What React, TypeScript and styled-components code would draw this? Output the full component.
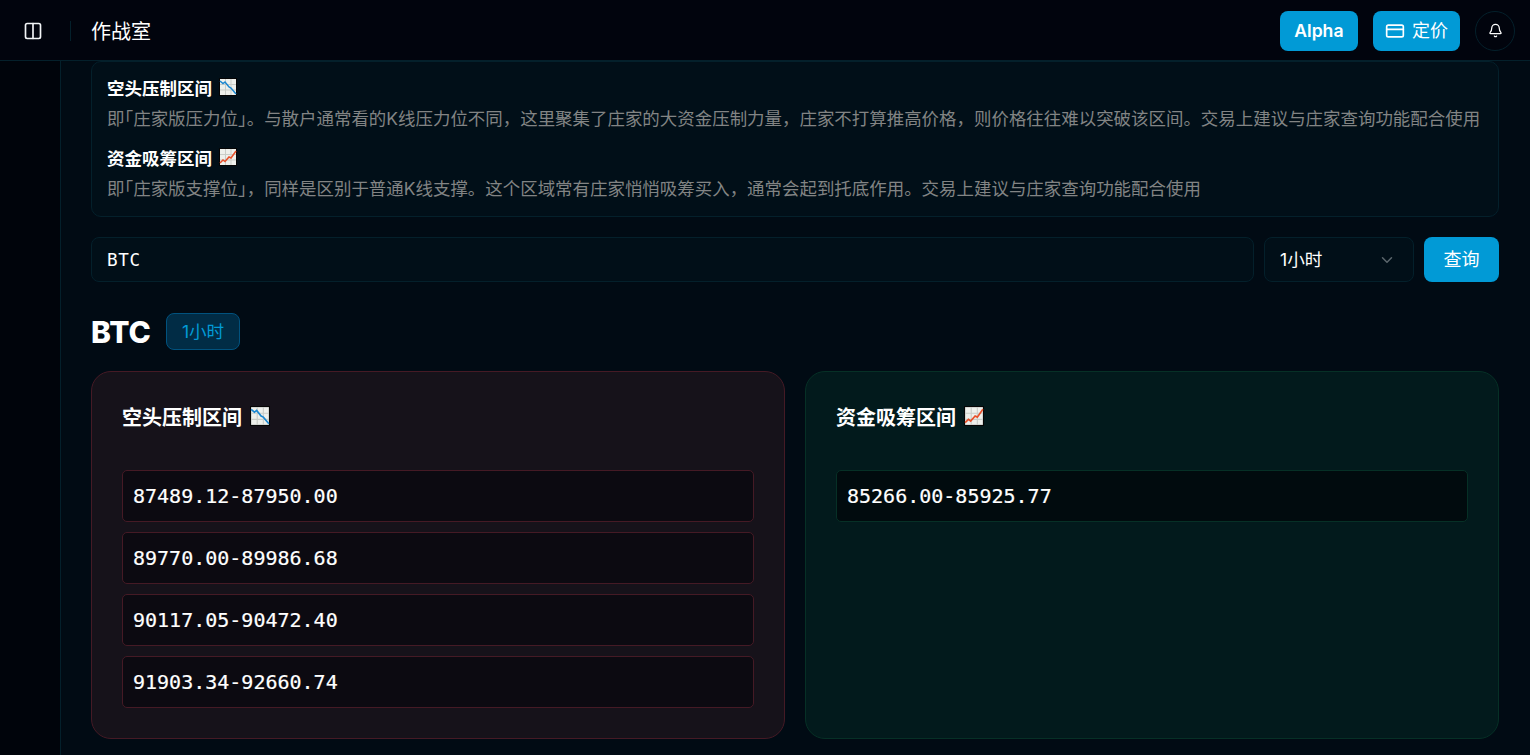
import React from 'react';
import styled, { createGlobalStyle } from 'styled-components';
import { Columns2, CreditCard, Bell, ChevronDown } from 'lucide-react';

const SANS = '"Inter", "Noto Sans CJK SC", sans-serif';
const MONO = '"DejaVu Sans Mono", monospace';

const GlobalStyle = createGlobalStyle`
  html, body {
    margin: 0;
    height: 100%;
    overflow: hidden;
    background: #00040b;
    font-family: ${SANS};
    color: #fff;
  }
  * { box-sizing: border-box; }
`;

const Page = styled.div`
  width: 1530px;
  height: 755px;
  display: flex;
  flex-direction: column;
`;

const Header = styled.header`
  height: 61px;
  flex: none;
  display: flex;
  align-items: center;
  padding: 1px 15px 0 23px;
  background: #01040d;
  border-bottom: 1px solid #04202b;
`;

const ToggleButton = styled.div`
  width: 20px;
  height: 20px;
  display: flex;
  color: #f2f5f7;
`;

const HeaderDivider = styled.div`
  width: 1px;
  height: 20px;
  margin: 0 20px 0 27px;
  background: #04202b;
`;

const PageTitle = styled.h1`
  margin: 0 0 1px;
  font-size: 20px;
  font-weight: 400;
  flex: 1;
`;

const HeaderButton = styled.button<{ $strong?: boolean }>`
  height: 40px;
  display: flex;
  align-items: center;
  gap: 7px;
  padding: 0 ${p => (p.$strong ? 14.5 : 12)}px;
  margin-right: 15px;
  border: 0;
  border-radius: 8px;
  background: #019ad6;
  color: #fff;
  font-family: ${SANS};
  font-size: ${p => (p.$strong ? 17.6 : 18)}px;
  font-weight: ${p => (p.$strong ? 600 : 400)};
`;

const ButtonLabel = styled.span`
  padding-bottom: 3px;
`;

const BellButton = styled.div`
  width: 40px;
  height: 40px;
  display: flex;
  align-items: center;
  justify-content: center;
  border: 1px solid #04202b;
  border-radius: 50%;
  color: #fff;
`;

const Body = styled.div`
  flex: 1;
  display: flex;
  min-height: 0;
`;

const Rail = styled.aside`
  width: 61px;
  flex: none;
  background: #00040b;
  border-right: 1px solid #04202b;
`;

const Main = styled.main`
  flex: 1;
  min-width: 0;
  padding: 0 31px 0 30px;
  background: #010b14;
`;

const Notes = styled.section`
  height: 156px;
  padding: 12px 15px 0;
  background: #010f18;
  border: 1px solid #04202b;
  border-radius: 10px;
`;

const NoteTitle = styled.div`
  display: flex;
  align-items: center;
  gap: 7px;
  height: 30px;
  padding-bottom: 4px;
  font-size: 17.5px;
  font-weight: 700;
`;

const NoteText = styled.p`
  margin: 0 0 10px;
  height: 30px;
  line-height: 30px;
  font-size: 17.47px;
  color: #828484;
  white-space: nowrap;
`;

const Bracket = styled.span`
  font-feature-settings: "halt";
`;

const SearchRow = styled.div`
  display: flex;
  gap: 10px;
  margin-top: 20px;
`;

const SymbolInput = styled.div`
  flex: 1;
  height: 45px;
  display: flex;
  align-items: center;
  padding: 0 15px;
  background: #010f18;
  border: 1px solid #04202b;
  border-radius: 8px;
  font-family: ${MONO};
  font-size: 17.6px;
  letter-spacing: 0.7px;
`;

const Select = styled.div`
  width: 150px;
  height: 45px;
  display: flex;
  align-items: center;
  justify-content: space-between;
  padding: 0 17px 0 15px;
  background: #010f18;
  border: 1px solid #04202b;
  border-radius: 8px;
  font-size: 17.6px;
  svg { color: #5b666c; }
`;

const QueryButton = styled.button`
  width: 75px;
  height: 45px;
  padding: 0 0 3px;
  border: 0;
  border-radius: 8px;
  background: #019ad6;
  color: #fff;
  font-family: ${SANS};
  font-size: 18px;
`;

const ResultHead = styled.div`
  display: flex;
  align-items: center;
  gap: 15px;
  margin-top: 31px;
  height: 37px;
`;

const Symbol = styled.h2`
  margin: 0;
  font-size: 30px;
  font-weight: 800;
`;

const IntervalTag = styled.span`
  height: 37px;
  padding: 0 15px 3px;
  display: flex;
  align-items: center;
  background: #012c45;
  border: 1px solid #01527e;
  border-radius: 8px;
  color: #019ad6;
  font-size: 17.6px;
`;

const Columns = styled.div`
  display: grid;
  grid-template-columns: 694px 694px;
  gap: 20px;
  margin-top: 21px;
`;

const Zone = styled.section<{ $tone: 'short' | 'long' }>`
  height: 368px;
  padding: 30px;
  border-radius: 20px;
  background: ${p => (p.$tone === 'short' ? '#16121a' : '#021a1c')};
  border: 1px solid ${p => (p.$tone === 'short' ? '#451a25' : '#063026')};
`;

const ZoneTitle = styled.h3`
  margin: 0 0 38px;
  height: 30px;
  padding-bottom: 2px;
  display: flex;
  align-items: center;
  gap: 8px;
  font-size: 20px;
  font-weight: 700;
`;

const RangeList = styled.div`
  display: flex;
  flex-direction: column;
  gap: 10px;
`;

const Range = styled.div<{ $tone: 'short' | 'long' }>`
  height: 52px;
  display: flex;
  align-items: center;
  padding: 0 10px;
  border-radius: 5px;
  background: ${p => (p.$tone === 'short' ? '#0c0a11' : '#010b0e')};
  border: 1px solid ${p => (p.$tone === 'short' ? '#451a25' : '#063026')};
  font-family: ${MONO};
  font-size: 20px;
  -webkit-text-stroke: 0.2px #fff;
`;

const ChartEmoji: React.FC<{ down?: boolean; size?: number }> = ({ down, size = 18 }) => (
  <svg width={size} height={size} viewBox="0 0 18 18" style={{ flex: 'none' }}>
    <rect width="18" height="18" fill="#050505" />
    <rect x="1" y="1" width="16" height="16" fill="#eef0ec" />
    <path d="M6.5 1v16M12 1v16M1 6.500h16M1 12h16" stroke="#c9cdc8" strokeWidth="1" fill="none" />
    {down ? (
      <path d="M1 3l3 2.500 2-1.500 4 5 2 1 5 6" stroke="#1b87d0" strokeWidth="1.500" fill="none" />
    ) : (
      <path d="M1 15l3-3 2 1.500 4-4.500 2 1 5-7" stroke="#e8502a" strokeWidth="1.500" fill="none" />
    )}
  </svg>
);

const shortRanges = ['87489.12-87950.00', '89770.00-89986.68', '90117.05-90472.40', '91903.34-92660.74'];
const longRanges = ['85266.00-85925.77'];

export default function App() {
  return (
    <Page>
      <GlobalStyle />
      <Header>
        <ToggleButton><Columns2 size={20} /></ToggleButton>
        <HeaderDivider />
        <PageTitle>作战室</PageTitle>
        <HeaderButton $strong>Alpha</HeaderButton>
        <HeaderButton><CreditCard size={20} /><ButtonLabel>定价</ButtonLabel></HeaderButton>
        <BellButton><Bell size={15} /></BellButton>
      </Header>
      <Body>
        <Rail />
        <Main>
          <Notes>
            <NoteTitle>空头压制区间 <ChartEmoji down /></NoteTitle>
            <NoteText>即<Bracket>「</Bracket>庄家版压力位<Bracket>」</Bracket>。与散户通常看的K线压力位不同，这里聚集了庄家的大资金压制力量，庄家不打算推高价格，则价格往往难以突破该区间。交易上建议与庄家查询功能配合使用</NoteText>
            <NoteTitle>资金吸筹区间 <ChartEmoji /></NoteTitle>
            <NoteText>即<Bracket>「</Bracket>庄家版支撑位<Bracket>」</Bracket>，同样是区别于普通K线支撑。这个区域常有庄家悄悄吸筹买入，通常会起到托底作用。交易上建议与庄家查询功能配合使用</NoteText>
          </Notes>
          <SearchRow>
            <SymbolInput>BTC</SymbolInput>
            <Select><ButtonLabel>1小时</ButtonLabel><ChevronDown size={18} /></Select>
            <QueryButton>查询</QueryButton>
          </SearchRow>
          <ResultHead>
            <Symbol>BTC</Symbol>
            <IntervalTag>1小时</IntervalTag>
          </ResultHead>
          <Columns>
            <Zone $tone="short">
              <ZoneTitle>空头压制区间 <ChartEmoji down size={20} /></ZoneTitle>
              <RangeList>
                {shortRanges.map(r => <Range key={r} $tone="short">{r}</Range>)}
              </RangeList>
            </Zone>
            <Zone $tone="long">
              <ZoneTitle>资金吸筹区间 <ChartEmoji size={20} /></ZoneTitle>
              <RangeList>
                {longRanges.map(r => <Range key={r} $tone="long">{r}</Range>)}
              </RangeList>
            </Zone>
          </Columns>
        </Main>
      </Body>
    </Page>
  );
}
